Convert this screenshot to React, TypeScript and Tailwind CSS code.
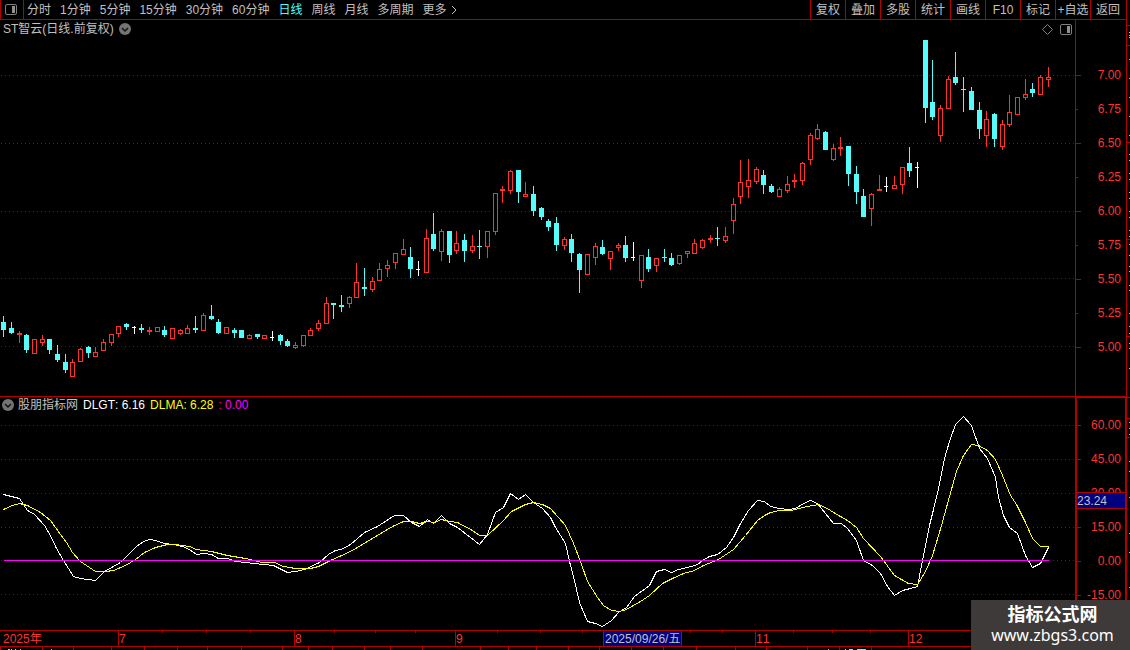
import clsx from "clsx";

type Kind = "up" | "down" | "flat";
type Candle = [kind: Kind, high: number, top: number, bottom: number, low: number];

const U = "up";
const D = "down";
const F = "flat";

const candles: Candle[] = [
  [D, 316, 322, 330, 337], [D, 322, 328, 333, 334], [U, 331, 333, 335, 343], [D, 334, 335, 350, 353],
  [U, 339, 339, 354, 354], [U, 335, 339, 343, 346], [D, 339, 339, 350, 354], [D, 345, 354, 360, 362],
  [D, 354, 362, 370, 373], [U, 359, 362, 377, 377], [U, 348, 349, 362, 362], [D, 346, 347, 353, 358],
  [U, 347, 352, 357, 357], [U, 339, 342, 351, 351], [U, 334, 334, 343, 346], [U, 326, 326, 334, 337],
  [D, 323, 324, 327, 330], [F, 326, 327, 328, 334], [D, 324, 328, 330, 333], [U, 327, 330, 332, 335],
  [U, 327, 327, 332, 332], [D, 326, 330, 335, 337], [U, 328, 328, 339, 339], [U, 329, 330, 334, 335],
  [U, 325, 328, 334, 334], [D, 316, 328, 330, 333], [U, 313, 315, 331, 331], [D, 305, 316, 319, 320],
  [D, 319, 322, 333, 334], [U, 327, 327, 334, 334], [D, 328, 330, 333, 338], [D, 330, 330, 338, 338],
  [U, 334, 335, 339, 339], [D, 334, 334, 337, 339], [U, 335, 335, 339, 339], [F, 331, 337, 338, 341],
  [D, 334, 335, 341, 345], [D, 339, 341, 346, 347], [U, 342, 345, 348, 349], [U, 335, 335, 346, 347],
  [U, 328, 330, 336, 336], [U, 320, 323, 329, 331], [U, 297, 303, 324, 324], [D, 303, 303, 305, 319],
  [D, 295, 305, 307, 312], [U, 296, 297, 304, 308], [U, 263, 282, 298, 298], [D, 268, 287, 289, 296],
  [U, 277, 281, 290, 292], [U, 263, 269, 281, 281], [U, 260, 265, 269, 277], [U, 253, 253, 263, 269],
  [U, 239, 249, 255, 255], [D, 247, 257, 269, 278], [F, 261, 269, 270, 276], [U, 229, 238, 273, 273],
  [D, 213, 234, 249, 251], [U, 229, 231, 252, 261], [D, 231, 231, 255, 263], [U, 231, 243, 251, 254],
  [D, 234, 240, 251, 262], [U, 235, 246, 251, 253], [D, 230, 246, 247, 259], [U, 231, 231, 247, 258],
  [U, 193, 193, 232, 235], [U, 186, 189, 191, 203], [U, 170, 171, 191, 194], [D, 170, 170, 192, 203],
  [U, 182, 194, 197, 197], [D, 186, 194, 211, 216], [D, 207, 208, 217, 220], [D, 219, 221, 227, 231],
  [D, 217, 223, 245, 251], [U, 237, 239, 246, 250], [D, 234, 239, 253, 262], [D, 253, 254, 270, 293],
  [U, 254, 254, 275, 275], [U, 243, 246, 258, 265], [D, 240, 247, 254, 255], [U, 251, 251, 259, 270],
  [U, 243, 245, 248, 251], [D, 236, 245, 258, 262], [F, 242, 257, 258, 261], [U, 255, 255, 281, 288],
  [D, 249, 257, 269, 272], [U, 258, 258, 266, 272], [D, 249, 257, 258, 262], [D, 253, 258, 265, 266],
  [U, 255, 255, 264, 265], [U, 251, 251, 254, 258], [U, 239, 243, 254, 254], [U, 239, 240, 248, 249],
  [U, 235, 238, 240, 243], [D, 227, 238, 239, 246], [U, 227, 236, 241, 243], [U, 198, 204, 221, 234],
  [U, 160, 182, 197, 204], [U, 159, 180, 187, 198], [U, 167, 169, 182, 184], [D, 170, 175, 185, 194],
  [D, 184, 186, 192, 193], [U, 187, 189, 197, 197], [U, 176, 184, 191, 193], [U, 174, 180, 182, 188],
  [U, 162, 163, 181, 185], [U, 133, 135, 160, 165], [U, 124, 129, 139, 140], [D, 131, 132, 150, 150],
  [U, 144, 148, 160, 161], [U, 137, 147, 149, 156], [D, 146, 146, 174, 186], [D, 166, 174, 192, 204],
  [D, 189, 196, 217, 217], [U, 193, 194, 209, 226], [U, 175, 189, 191, 191], [F, 177, 186, 187, 192],
  [U, 176, 185, 189, 189], [U, 167, 167, 185, 194], [D, 147, 163, 171, 177], [F, 162, 167, 168, 188],
  [D, 40, 40, 108, 123], [D, 60, 102, 117, 120], [U, 105, 108, 136, 142], [U, 76, 79, 109, 109],
  [D, 52, 77, 83, 85], [D, 77, 89, 90, 112], [D, 87, 91, 110, 110], [D, 102, 110, 129, 139],
  [U, 111, 119, 136, 147], [D, 113, 114, 139, 147], [U, 120, 124, 147, 150], [U, 95, 112, 125, 127],
  [U, 97, 97, 115, 115], [U, 79, 94, 98, 100], [D, 83, 89, 93, 97], [U, 75, 77, 95, 95],
  [U, 67, 77, 80, 87],
];

const dlgt =
  "3,494 19,498 27,510 34,514 44,525 50,535 56,548 63,560 73,576 80,578 95,580 104,571 120,562 127,555 136,546 143,541 149,539 155,540 164,543 173,544 182,546 189,549 196,554 203,553 211,554 218,558 227,558 235,561 245,562 263,564 273,565 287,572 295,571 304,569 319,562 328,554 335,550 341,549 350,544 364,532 377,526 394,515 403,515 411,522 419,526 427,519 433,523 441,515 449,523 457,527 479,544 487,534 495,512 503,507 510,493 518,499 525,494 533,502 542,508 550,517 555,527 565,543 569,561 574,580 579,602 587,621 595,623 602,626 611,620 618,612 626,607 634,596 649,585 656,571 664,569 671,572 678,569 687,567 694,565 697,564 702,560 709,556 717,554 726,547 733,537 740,523 748,510 757,500 764,501 770,506 779,508 788,509 795,508 803,503 810,500 817,503 825,513 833,523 841,523 847,528 856,540 863,560 872,565 880,573 887,586 894,595 902,590 910,588 917,586 922,560 929,525 937,493 944,458 949,441 955,424 963,416 971,425 979,448 987,458 995,477 998,497 1003,515 1009,527 1017,533 1025,555 1032,567 1040,563 1048,547";

const dlma =
  "3,509 12,505 19,503 27,505 40,512 50,520 60,534 66,542 72,552 80,561 95,571 105,571 113,570 125,565 135,559 144,552 155,547 167,544 175,544 189,546 196,549 211,551 227,555 245,558 262,562 274,562 283,566 295,568 310,568 318,566 330,560 350,551 372,538 392,526 403,521 411,521 419,523 427,521 434,522 441,519 449,521 457,522 472,530 479,535 487,535 503,520 511,511 525,504 533,502 542,504 550,508 565,525 573,543 580,561 587,581 597,597 603,605 611,610 619,611 626,609 640,601 649,595 662,583 672,578 683,573 694,570 703,565 718,559 733,549 745,535 757,520 764,515 770,512 779,510 790,510 807,506 818,504 827,508 833,512 847,520 856,527 863,538 880,556 894,575 908,583 917,584 925,571 932,555 941,525 949,496 956,471 963,455 971,444 978,445 987,450 995,459 1002,475 1010,495 1016,504 1025,522 1032,538 1040,546 1048,546";

const periods = ["分时", "1分钟", "5分钟", "15分钟", "30分钟", "60分钟", "日线", "周线", "月线", "多周期"];
const tools = ["复权", "叠加", "多股", "统计", "画线", "F10", "标记", "+自选", "返回"];
const prices = ["7.00", "6.75", "6.50", "6.25", "6.00", "5.75", "5.50", "5.25", "5.00"];
const levels = ["60.00", "45.00", "30.00", "15.00", "0.00", "-15.00"];
const months = ["2025年", "7", "8", "9", "", "11", "12"];

const priceGrid = [75, 143, 211, 278, 346];
const levelGrid = [425, 459, 493, 527, 560, 594];
const weekTicks = [162, 206, 250, 334, 375, 415, 497, 540, 582, 690, 722, 793, 832, 870];
const tabEdges = [0, 42, 73, 111, 144, 177, 207, 241, 282, 308, 332, 364, 390, 422, 480, 508, 536, 568, 599, 631, 663, 696, 735, 766, 807, 839, 871];
const railEdges = [25, 45, 142, 239, 336, 397, 418, 437];
const railMarks = [32, 35, 37, 59, 78, 97, 116, 135, 154, 160, 173, 179, 192, 198, 211, 217, 230, 236, 244, 255, 266, 271, 285, 290, 313, 326, 333, 343, 348, 368, 422, 428, 434, 461, 471, 497, 533, 552, 587];

function PanelIcon() {
  return (
    <svg className="h-[11px] w-3 shrink-0" viewBox="0 0 12 11">
      <rect x="0.5" y="0.5" width="11" height="10" rx="1.5" fill="none" stroke="#808080" />
      <rect x="7" y="2" width="3" height="7" fill="#909090" />
    </svg>
  );
}

function RoundChevron() {
  return (
    <svg className="size-3 shrink-0" viewBox="0 0 12 12">
      <circle cx="6" cy="6" r="6" fill="#747474" />
      <path d="M3 5l3 3 3-3" fill="none" stroke="#111" strokeWidth="1.5" />
    </svg>
  );
}

function GridLines({ rows }: { rows: number[] }) {
  return (
    <g stroke="#a00000" strokeDasharray="1 3" shapeRendering="crispEdges">
      {rows.map((y) => (
        <line key={y} x1="1" x2="1075" y1={y + 0.5} y2={y + 0.5} />
      ))}
    </g>
  );
}

function CandleShape({ candle, index }: { candle: Candle; index: number }) {
  const [kind, high, top, bottom, low] = candle;
  const x = Math.round(3.15 + index * 7.68);
  const color = kind === "up" ? "#ff3232" : kind === "down" ? "#54fcfc" : "#ffffff";
  const hollow = kind === "up" && bottom - top > 2;
  return (
    <g fill={color}>
      <rect x={x} y={high} width="1" height={top - high} />
      <rect x={x} y={bottom} width="1" height={low - bottom} />
      {hollow ? (
        <rect x={x - 1.5} y={top + 0.5} width="4" height={bottom - top - 1} fill="#000" stroke={color} />
      ) : (
        <rect x={x - 2} y={top} width={kind === "flat" ? 4 : 5} height={bottom - top} />
      )}
    </g>
  );
}

function Toolbar() {
  return (
    <header className="flex h-5 items-stretch justify-between border-b border-l border-[#b40000]">
      <nav className="flex items-stretch">
        <button aria-label="侧栏" className="flex w-[23px] items-center border-r border-[#b40000] pl-1">
          <PanelIcon />
        </button>
        <div className="flex items-center gap-[9px] pl-[3px]">
          {periods.map((p) => (
            <button key={p} className={clsx("whitespace-nowrap", p === "日线" && "text-[#54fcfc]")}>
              {p}
            </button>
          ))}
          <button className="flex items-center gap-1 whitespace-nowrap">
            更多
            <svg className="h-2.5 w-1.5" viewBox="0 0 6 10">
              <path d="M1 1l4 4-4 4" fill="none" stroke="#c0c0c0" />
            </svg>
          </button>
        </div>
      </nav>
      <div className="flex items-stretch border-r border-[#b40000] pr-px">
        {tools.map((t) => (
          <button key={t} className="w-[35px] whitespace-nowrap border-l border-[#b40000] text-center">
            {t}
          </button>
        ))}
      </div>
    </header>
  );
}

function PricePanel() {
  return (
    <section className="flex border-b border-[#b40000]">
      <div className="min-w-0 flex-1">
        <div className="flex h-[18px] items-center justify-between px-[3px]">
          <h1 className="flex items-center gap-[5px]">
            ST智云(日线.前复权)
            <RoundChevron />
          </h1>
          <div className="flex items-center gap-[7px]">
            <svg className="size-[11px]" viewBox="0 0 11 11">
              <path d="M5.5 0.5l5 5-5 5-5-5z" fill="none" stroke="#808080" />
            </svg>
            <PanelIcon />
          </div>
        </div>
        <svg className="block h-[358px] w-full" viewBox="0 38 1075 358" preserveAspectRatio="none">
          <GridLines rows={priceGrid} />
          {candles.map((c, i) => (
            <CandleShape key={i} candle={c} index={i} />
          ))}
        </svg>
      </div>
      <div className="w-[52px] border-x border-[#b40000] pt-[38px]">
        {prices.map((p, i) => (
          <div key={p} className="flex h-[34px] items-center justify-between pr-[5px] text-[#ff3232]">
            <span className={clsx("h-px bg-[#b40000]", i % 2 ? "w-0.5" : "w-[5px]")} />
            {p}
          </div>
        ))}
      </div>
    </section>
  );
}

function IndicatorPanel() {
  return (
    <section className="flex">
      <div className="min-w-0 flex-1">
        <div className="flex h-4 items-center gap-[5px] whitespace-nowrap pl-0.5">
          <h2 className="flex items-center gap-1">
            <RoundChevron />
            股朋指标网
          </h2>
          <span className="text-white">DLGT: 6.16</span>
          <span className="text-[#ffff00]">DLMA: 6.28</span>
          <span className="text-[#ff00ff]">: 0.00</span>
        </div>
        <svg className="block h-[217px] w-full" viewBox="0 413 1075 217" preserveAspectRatio="none">
          <GridLines rows={levelGrid} />
          <g fill="none" shapeRendering="crispEdges" transform="translate(0.5 0.5)">
            <polyline points={dlgt} stroke="#ffffff" />
            <polyline points={dlma} stroke="#ffff00" />
            <line x1="3" x2="1048" y1="560" y2="560" stroke="#ff00ff" />
          </g>
        </svg>
      </div>
      <div className="relative w-[52px] border-x-2 border-t border-[#b40000] pt-2.5">
        {levels.map((l) => (
          <div key={l} className="flex h-[34px] items-center justify-between pr-1 text-[#ff3232]">
            <span className="h-px w-1 bg-[#b40000]" />
            {l}
          </div>
        ))}
        <div className="absolute inset-x-0 top-[94px] flex h-[17px] items-center border-y border-[#b40000] bg-[#000080]">
          23.24
        </div>
      </div>
    </section>
  );
}

function TimeAxis() {
  return (
    <footer>
      <div className="relative flex h-[17px] border-y border-[#b40000] pr-[52px] text-[#ff3232]">
        <div className="grid min-w-0 flex-1 grid-cols-[118fr_176fr_161fr_148fr_152fr_153fr_167fr]">
          {months.map((m, i) => (
            <div key={i} className={clsx("flex min-w-0 items-center", i > 0 ? "border-l border-[#b40000]" : "pl-[3px]")}>
              {m || (
                <span className="flex h-full items-center whitespace-nowrap border-r border-[#b40000] bg-[#000080] px-px text-[#c0c0c0]">
                  2025/09/26/五
                </span>
              )}
            </div>
          ))}
        </div>
        <svg className="absolute left-0 top-0 h-0.5 w-full" viewBox="0 0 1127 2" preserveAspectRatio="none">
          {weekTicks.map((x) => (
            <rect key={x} x={x} width="1" height="2" fill="#b40000" />
          ))}
        </svg>
      </div>
      <svg className="block h-[3px] w-full" viewBox="0 0 1127 3" preserveAspectRatio="none">
        {tabEdges.map((x) => (
          <rect key={x} x={x} width="1" height="3" fill="#b40000" />
        ))}
        <path d="M8 2.5h2M11 2.5h1M15 2.5h1M20 2.5h1M51 2.5h1M828 2.5h1" stroke="#c0c0c0" />
        <path d="M845 2.5h1M849 2.5h4M857 2.5h9" stroke="#54fcfc" />
      </svg>
    </footer>
  );
}

export default function App() {
  return (
    <div className="relative flex min-h-screen overflow-hidden bg-black font-['Liberation_Sans','Noto_Sans_CJK_SC',sans-serif] text-[12px] leading-[14px] text-[#c0c0c0] [font-kerning:none]">
      <main className="min-w-0 flex-1">
        <Toolbar />
        <PricePanel />
        <IndicatorPanel />
        <TimeAxis />
      </main>
      <svg className="h-[650px] w-[3px] shrink-0" viewBox="0 0 3 650">
        {railEdges.map((y) => (
          <rect key={y} y={y} width="3" height="1" fill="#b40000" />
        ))}
        {railMarks.map((y) => (
          <rect key={y} x="2" y={y} width="1" height="1" fill="#c0c0c0" />
        ))}
      </svg>
      <aside className="absolute bottom-0 right-0 flex h-[50px] w-[159px] flex-col items-center justify-center bg-[#3e3a39] pl-1 text-white">
        <strong className="text-[18px] leading-5">指标公式网</strong>
        <a href="#" className="font-['Noto_Sans',sans-serif] text-[16px] leading-5">
          www.zbgs3.com
        </a>
      </aside>
    </div>
  );
}
